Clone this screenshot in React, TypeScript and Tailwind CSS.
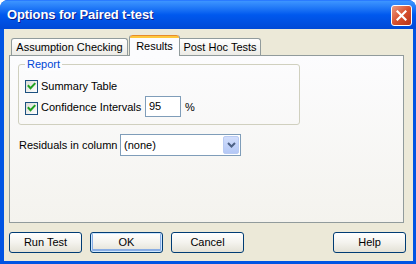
import React from 'react'

const ui = { fontFamily: '"Liberation Sans", Arial, sans-serif' }

function CheckBox({ checked }: { checked: boolean }) {
  return (
    <div className="w-[13px] h-[13px] shrink-0 border border-[#1C5180] bg-gradient-to-br from-[#DCDCD7] to-white flex items-center justify-center">
      {checked && (
        <svg width="9" height="9" viewBox="0 0 9 9">
          <path d="M1.5 4 L3.5 6.2 L7.6 1.8" fill="none" stroke="#21A121" strokeWidth="2" strokeLinecap="square" />
        </svg>
      )}
    </div>
  )
}

function XpButton({ label, isDefault = false, className = '' }: { label: string; isDefault?: boolean; className?: string }) {
  return (
    <button
      className={`block w-[73px] h-[21px] rounded-[3px] border border-[#003C74] text-[11px] text-black bg-gradient-to-b from-white via-[#F4F3EE] to-[#E3E1D6] ${
        isDefault ? 'shadow-[inset_0_0_0_1px_#CEE7FF,inset_0_-1px_0_2px_#89ADE4]' : ''
      } ${className}`}
    >
      {label}
    </button>
  )
}

export default function App() {
  return (
    <div className="w-[416px] h-[264px] flex flex-col bg-[#0054E3] rounded-t-[8px] overflow-hidden select-none" style={ui}>
      {/* title bar */}
      <div className="h-[29px] shrink-0 flex items-center justify-between pl-[7px] pr-[4px] bg-gradient-to-b from-[#3D95FF] via-[#0058EE] to-[#0049D6] border-t border-[#2A7BFF]">
        <span className="text-white font-bold text-[13px] tracking-[-0.1px] [text-shadow:1px_1px_0_#0F1D8A]">
          Options for Paired t-test
        </span>
        <div className="w-[21px] h-[21px] rounded-[3px] border border-white bg-gradient-to-br from-[#E99A82] via-[#D8502E] to-[#B8341A] flex items-center justify-center">
          <svg width="11" height="11" viewBox="0 0 11 11">
            <path d="M1.5 1.5 L9.5 9.5 M9.5 1.5 L1.5 9.5" stroke="white" strokeWidth="2.2" strokeLinecap="square" />
          </svg>
        </div>
      </div>

      {/* client area */}
      <div className="flex-1 ml-[4px] mr-[3px] mb-[3px] bg-[#ECE9D8] flex flex-col pl-[5px] pr-[9px] pt-[6px]">
        {/* tabs */}
        <div className="flex items-end h-[20px] pl-[2px] text-[11px] text-black">
          <div className="w-[117px] h-[17px] border border-b-0 border-[#919B9C] rounded-t-[3px] bg-gradient-to-b from-white to-[#ECEBE6] flex items-center justify-center">
            Assumption Checking
          </div>
          <div className="relative z-10 ml-[1px] -mb-[1px] w-[51px] h-[21px] border-x border-[#919B9C] rounded-t-[3px] bg-[#FCFCFE] flex flex-col">
            <div className="h-[3px] rounded-t-[3px] bg-[#FFC83C] border-t border-[#E68B2C]" />
            <div className="flex-1 flex items-center justify-center pb-[1px]">Results</div>
          </div>
          <div className="w-[81px] h-[17px] border border-b-0 border-l-0 border-[#919B9C] rounded-tr-[3px] bg-gradient-to-b from-white to-[#ECEBE6] flex items-center justify-center">
            Post Hoc Tests
          </div>
        </div>

        {/* panel */}
        <div className="h-[168px] border border-[#919B9C] bg-gradient-to-b from-[#FCFCFE] to-[#F4F3EE] pl-[8px] pt-[8px] text-[11px] text-black">
          <div className="relative w-[282px] h-[61px] border border-[#D0D0BF] rounded-[3px] pl-[6px] pt-[15px]">
            <span className="absolute -top-[8px] left-[6px] px-[2px] bg-[#FCFCFE] text-[#0046D5] leading-[14px]">Report</span>
            <div className="flex items-center gap-[3px] h-[13px]">
              <CheckBox checked />
              <span>Summary Table</span>
            </div>
            <div className="flex items-start mt-[3px] h-[21px]">
              <div className="mt-[6px]">
                <CheckBox checked />
              </div>
              <span className="ml-[3px] mt-[5px] leading-[13px] w-[104px]">Confidence Intervals</span>
              <div className="w-[36px] h-[21px] border border-[#7F9DB9] bg-white pl-[3px] flex items-center">95</div>
              <span className="ml-[4px] mt-[5px] leading-[13px]">%</span>
            </div>
          </div>

          <div className="flex items-center mt-[9px] pl-[1px] h-[22px]">
            <span className="w-[101px]">Residuals in column</span>
            <div className="w-[121px] h-[22px] border border-[#7F9DB9] bg-white flex items-center justify-between pl-[3px] pr-[1px]">
              <span>(none)</span>
              <div className="w-[16px] h-[18px] rounded-[2px] border border-[#B9CBF3] bg-gradient-to-b from-[#D2DEFC] to-[#B4C8F6] flex items-center justify-center">
                <svg width="9" height="6" viewBox="0 0 9 6">
                  <path d="M1 1 L4.5 4.5 L8 1" fill="none" stroke="#4D6185" strokeWidth="2" />
                </svg>
              </div>
            </div>
          </div>
        </div>

        {/* buttons */}
        <div className="flex items-start mt-[9px] gap-[8px]">
          <XpButton label="Run Test" />
          <XpButton label="OK" isDefault />
          <XpButton label="Cancel" />
          <div className="flex-1" />
          <XpButton label="Help" className="-mr-[2px]" />
        </div>
      </div>
    </div>
  )
}
